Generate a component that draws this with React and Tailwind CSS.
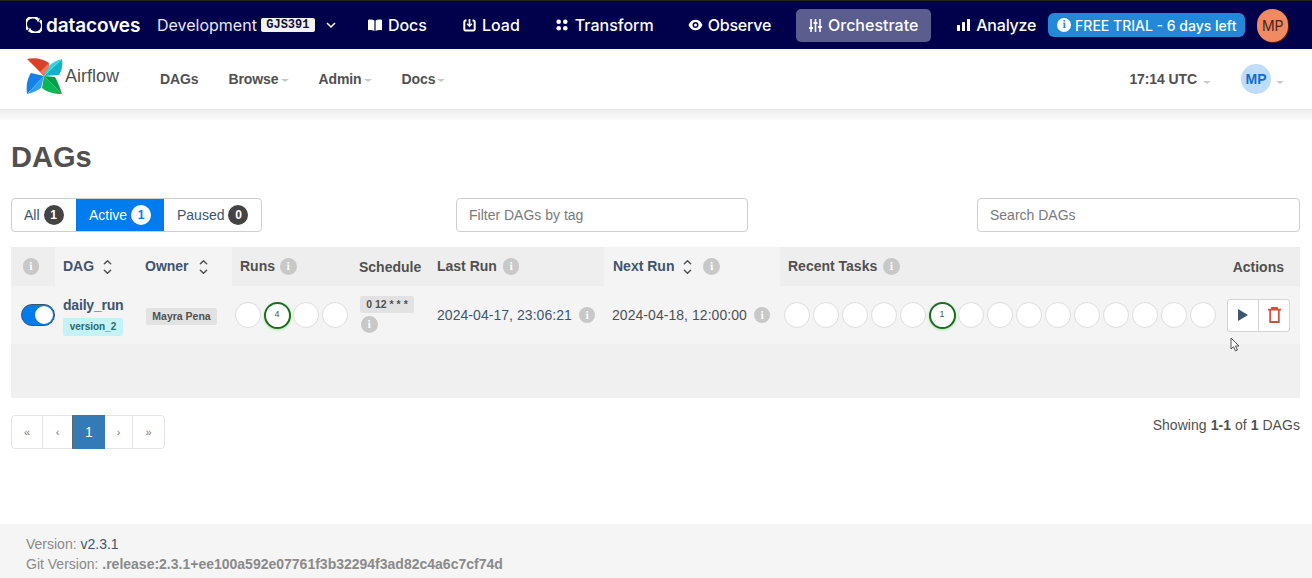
import React from 'react';

const Info = ({ className = '' }) => (
  <span className={`inline-flex w-[16.5px] h-[16.5px] rounded-full bg-[#c8c8c8] text-white items-center justify-center text-[11px] font-bold font-serif leading-none shrink-0 ${className}`}>i</span>
);

const Sort = () => (
  <svg width="9" height="18" viewBox="0 0 10 18" fill="none" stroke="#51504f" strokeWidth="1.6" strokeLinecap="round" strokeLinejoin="round">
    <path d="M1.5 5.5 5 2l3.5 3.5" />
    <path d="M1.5 12.5 5 16l3.5-3.5" />
  </svg>
);

const Circle = ({ value }) =>
  value ? (
    <div className="w-[27px] h-[27px] -mx-[0.5px] rounded-full border-2 border-[#1f6b24] bg-white shadow-[0_1px_3px_#a6e8a0] flex items-center justify-center text-[9px] text-[#51504f] shrink-0">
      {value}
    </div>
  ) : (
    <div className="w-[26px] h-[26px] rounded-full border border-[#dedede] bg-white shrink-0" />
  );

const Caret = () => <span className="ml-[2px] mt-[3px] border-x-[4px] border-x-transparent border-t-[3px] border-t-[#c9c9c9] inline-block" />;

const TopLink = ({ icon, label, gap = 'gap-[6px]', className = '' }) => (
  <div className={`flex items-center ${gap} text-white text-[16px] font-medium ${className}`}>
    {icon}
    <span>{label}</span>
  </div>
);

const Pinwheel = () => (
  <svg width="37" height="38" viewBox="0 0 37 38">
    <path d="M1 2 C9 0 17 2 23 6 L18 19 Z" fill="#d8412a" />
    <path d="M23 6 C24 9 23 13 18 19 L14 15 Z" fill="#ee7a5c" />
    <path d="M36 2 C37 8 36 13 33 18 L18 19 Z" fill="#11b3c9" />
    <path d="M36 2 L18 19 L24 8 C27 5 32 3 36 2Z" fill="#35d3dd" />
    <path d="M36 37 C28 37 21 35 16 31 L18 19 Z" fill="#07b654" />
    <path d="M36 37 L18 19 L29 20 C32 25 34 31 36 37Z" fill="#00a04a" />
    <path d="M1 37 C0 29 1 22 5 16 L18 19 Z" fill="#1481ea" />
    <path d="M1 37 L18 19 L15 31 C11 34 6 36 1 37Z" fill="#2f9ff2" />
  </svg>
);

const App = () => {
  return (
    <div className="relative w-[1312px] h-[578px] flex flex-col bg-white overflow-hidden font-['Liberation_Sans',sans-serif] text-[#51504f]">
      <header className="h-[49px] shrink-0 bg-[#00004b] border-t border-t-[#222] flex items-center text-white font-['Inter',sans-serif]">
        <div className="flex items-center w-[148px] pl-[26px] gap-[4px]">
          <svg width="16" height="16" viewBox="0 0 16 16" fill="none" stroke="white" strokeWidth="2.6">
            <path d="M2 12.500A7 7 0 0 1 11.500 2" />
            <path d="M14 3.500A7 7 0 0 1 4.500 14" />
            <path d="M9.500 0.500 14 1.500 12 5.500Z" fill="white" stroke="none" />
            <path d="M6.500 15.500 2 14.500 4 10.500Z" fill="white" stroke="none" />
          </svg>
          <span className="text-[19px] font-semibold tracking-[-0.1px] leading-none">datacoves</span>
        </div>
        <span className="ml-[9px] text-[16px] text-[#e8e8f2]">Development</span>
        <span className="ml-[4px] bg-[#f2f2f4] text-[#10103c] rounded-[2px] w-[54px] h-[14px] flex items-center justify-center text-[12px] font-bold font-['Liberation_Mono',monospace]">GJS391</span>
        <svg className="ml-[11px]" width="10" height="7" viewBox="0 0 10 7" fill="none" stroke="white" strokeWidth="1.5"><path d="M1 1l4 4 4-4" /></svg>
        <TopLink
          className="ml-[32px]"
          label="Docs"
          icon={<svg width="14" height="12" viewBox="0 0 14 12" fill="white"><path d="M0 1c2.200-.8 4.500-.6 6.400.6V12C4.500 11 2.200 10.800 0 11.300ZM14 1c-2.200-.8-4.500-.6-6.400.6V12c1.900-1 4.200-1.200 6.400-.7Z" /></svg>}
        />
        <TopLink
          className="ml-[36px]"
          label="Load"
          icon={<svg width="13" height="13" viewBox="0 0 13 13" fill="none" stroke="white" strokeWidth="2"><path d="M3.500 1.500H2.500a1.200 1.200 0 0 0-1.200 1.200v7.600a1.200 1.200 0 0 0 1.200 1.200h8a1.200 1.200 0 0 0 1.200-1.200V2.700a1.200 1.200 0 0 0-1.200-1.200H9.500" /><path d="M6.500 0v6" strokeWidth="1.700" /><path d="M4.200 4.800l2.300 2.400 2.300-2.400" strokeWidth="1.500" /></svg>}
        />
        <TopLink
          className="ml-[36px]"
          label="Transform"
          gap="gap-[7px]"
          icon={<svg width="12" height="12" viewBox="0 0 12 12" fill="white"><circle cx="2.700" cy="2.700" r="2.300" /><circle cx="9.300" cy="2.700" r="2.300" /><circle cx="2.700" cy="9.300" r="2.300" /><circle cx="9.300" cy="9.300" r="2.300" /></svg>}
        />
        <TopLink
          className="ml-[34px] tracking-[-0.2px]"
          label="Observe"
          gap="gap-[5px]"
          icon={<svg width="15" height="12" viewBox="0 0 15 12"><path d="M.5 6C2 2.500 4.500.8 7.500.8S13 2.500 14.500 6C13 9.500 10.500 11.200 7.500 11.200S2 9.500.5 6Z" fill="white" /><circle cx="7.500" cy="6" r="3" fill="#00004b" /><circle cx="7.500" cy="6" r="1.500" fill="white" /></svg>}
        />
        <div className="ml-[25px] w-[135px] h-[33px] rounded-[5px] bg-[#5a5d8e] flex items-center justify-center">
          <TopLink
            label="Orchestrate"
            icon={<svg width="13" height="13" viewBox="0 0 13 13" fill="none" stroke="white" strokeWidth="1.600"><path d="M2 0v13M6.500 0v13M11 0v13" /><path d="M0 9h4M4.500 4h4M9 8h4" strokeWidth="2" /></svg>}
          />
        </div>
        <TopLink
          className="ml-[26px] tracking-[-0.2px]"
          label="Analyze"
          icon={<svg width="13" height="12" viewBox="0 0 13 12" fill="white"><rect x="0" y="6" width="3" height="6" rx="0.500" /><rect x="5" y="3" width="3" height="9" rx="0.500" /><rect x="10" y="0" width="3" height="12" rx="0.500" /></svg>}
        />
        <div className="ml-[12px] w-[197px] h-[24px] rounded-[6px] bg-[#2388d8] flex items-center justify-center gap-[4px] text-[14px] font-medium whitespace-nowrap">
          <span className="w-[14px] h-[14px] rounded-full bg-white text-[#2388d8] flex items-center justify-center text-[11px] font-bold font-serif">i</span>
          FREE TRIAL - 6 days left
        </div>
        <div className="ml-[12px] w-[31px] h-[33px] rounded-full bg-[#ef8a62] shadow-[1px_1px_0_#5a1a10] text-[#4a2418] text-[14px] flex items-center justify-center">MP</div>
      </header>

      <nav className="h-[61px] shrink-0 bg-white border-b border-b-[#e4e4e4] flex items-center text-[14px] font-bold tracking-[-0.1px]">
        <div className="ml-[26px] mb-[6px]"><Pinwheel /></div>
        <span className="ml-[2px] mb-[6px] text-[18px] font-normal text-[#51504f] tracking-normal">Airflow</span>
        <span className="ml-[41px]">DAGs</span>
        <span className="ml-[30px] flex items-center">Browse<Caret /></span>
        <span className="ml-[30px] flex items-center">Admin<Caret /></span>
        <span className="ml-[30px] flex items-center">Docs<Caret /></span>
        <span className="ml-auto flex items-center">17:14 UTC<span className="ml-[4px]"><Caret /></span></span>
        <div className="ml-[30px] w-[30px] h-[30px] rounded-full bg-[#bfdcf8] text-[#0f6fcf] flex items-center justify-center text-[14px]">MP</div>
        <span className="ml-[3px] mr-[28px]"><Caret /></span>
      </nav>

      <div className="h-[10px] shrink-0 bg-linear-to-b from-[#efefef] to-[#fafafa]" />

      <main className="flex-1 pl-[11px] pr-[12px]">
        <h1 className="mt-[19px] text-[29px] leading-[36px] font-bold text-[#51504f]">DAGs</h1>

        <div className="mt-[23px] flex items-center h-[34px] text-[14px]">
          <div className="flex h-[34px] w-[251px] border border-[#cfcfcf] rounded-[4px] overflow-hidden text-[#3e5570]">
            <div className="w-[64px] flex items-center pl-[12px] gap-[4px]">
              All
              <span className="w-[20px] h-[20px] rounded-full bg-[#444] text-white text-[12px] font-bold flex items-center justify-center">1</span>
            </div>
            <div className="w-[88px] bg-[#017cee] text-white flex items-center pl-[13px] gap-[4px]">
              Active
              <span className="w-[20px] h-[20px] rounded-full bg-white text-[#017cee] text-[12px] font-bold flex items-center justify-center">1</span>
            </div>
            <div className="flex-1 flex items-center pl-[13px] gap-[4px]">
              Paused
              <span className="w-[20px] h-[20px] rounded-full bg-[#444] text-white text-[12px] font-bold flex items-center justify-center">0</span>
            </div>
          </div>
          <div className="ml-[194px] w-[292px] h-[34px] border border-[#cfcfcf] rounded-[4px] flex items-center px-[12px] text-[#7a7a7a]">Filter DAGs by tag</div>
          <div className="ml-auto w-[323px] h-[34px] border border-[#cfcfcf] rounded-[4px] flex items-center px-[12px] text-[#7a7a7a]">Search DAGs</div>
        </div>

        <div className="mt-[15px] text-[14px]">
          <div className="flex h-[39px] font-bold bg-[#eeeeee] items-center">
            <div className="w-[44px] h-full flex items-center justify-center pr-[4px]"><Info /></div>
            <div className="w-[82px] h-full bg-[#f4f4f5] flex items-center gap-[9px] pl-[8px] text-[#3e5570]">DAG <Sort /></div>
            <div className="w-[95px] h-full bg-[#f4f4f5] flex items-center gap-[10px] pl-[8px] text-[#3e5570]">Owner <Sort /></div>
            <div className="w-[119px] flex items-center gap-[5px] pl-[8px]">Runs <Info /></div>
            <div className="w-[78px] pl-[8px] pt-[2px]">Schedule</div>
            <div className="w-[175px] flex items-center gap-[6px] pl-[8px]">Last Run <Info /></div>
            <div className="w-[176px] h-full bg-[#f4f4f5] flex items-center gap-[9px] pl-[9px] text-[#3e5570]">Next Run <Sort /><span className="ml-[2px] flex"><Info /></span></div>
            <div className="w-[442px] flex items-center gap-[6px] pl-[8px]">Recent Tasks <Info /></div>
            <div className="w-[78px] text-right pr-[16px] pt-[2px]">Actions</div>
          </div>

          <div className="flex h-[58px] bg-[#f4f4f5] items-center">
            <div className="w-[44px] flex justify-end">
              <div className="w-[34px] h-[22px] rounded-full bg-[#017cee] border border-[#3e5570] flex items-center justify-end pr-[1px]">
                <div className="w-[18px] h-[18px] rounded-full bg-white" />
              </div>
            </div>
            <div className="w-[82px] pl-[8px] pt-[2px]">
              <div className="font-bold text-[#3e5570] leading-[17px] tracking-[-0.2px]">daily_run</div>
              <div className="mt-[4px] w-[60px] h-[18px] bg-[#c5f2f5] rounded-[2px] text-[10px] font-bold text-[#2a6b6e] flex items-center justify-center">version_2</div>
            </div>
            <div className="w-[95px] pl-[9px] pt-[3px]">
              <div className="w-[71px] h-[17px] bg-[#e2e2e2] rounded-[2px] text-[10.500px] font-bold flex items-center justify-center">Mayra Pena</div>
            </div>
            <div className="w-[119px] pl-[3px] flex items-center gap-[3px]">
              <Circle />
              <Circle value="4" />
              <Circle />
              <Circle />
            </div>
            <div className="w-[78px] pl-[9px]">
              <div className="w-[54px] h-[17px] bg-[#e2e2e2] rounded-[2px] text-[10.500px] font-bold flex items-center justify-center">0 12 * * *</div>
              <Info className="mt-[3px] ml-[1px]" />
            </div>
            <div className="w-[175px] pl-[8px] flex items-center gap-[7px] text-[#3e5570] tracking-[0.05px]">2024-04-17, 23:06:21 <Info /></div>
            <div className="w-[176px] pl-[8px] flex items-center gap-[7px] tracking-[0.05px]">2024-04-18, 12:00:00 <Info /></div>
            <div className="w-[442px] pl-[4px] flex items-center gap-[3px]">
              {[0, 1, 2, 3, 4].map((i) => <Circle key={i} />)}
              <Circle value="1" />
              {[0, 1, 2, 3, 4, 5, 6, 7, 8].map((i) => <Circle key={i} />)}
            </div>
            <div className="w-[78px] pl-[5px]">
              <div className="w-[63px] h-[33px] flex border border-[#d4d4d4] rounded-[3px] bg-white">
                <div className="w-[31px] flex items-center justify-center border-r border-r-[#d4d4d4]">
                  <svg width="10" height="12" viewBox="0 0 10 12" fill="#3e5570"><path d="M0 0l10 6L0 12z" /></svg>
                </div>
                <div className="flex-1 flex items-center justify-center">
                  <svg width="13" height="16" viewBox="0 0 13 16" fill="none" stroke="#c9523a" strokeWidth="1.800"><path d="M0 2.700h13M4 2.700V1h5v1.700M2.200 3v12h8.600V3" /></svg>
                </div>
              </div>
            </div>
          </div>

          <div className="h-[54px] bg-[#f0f0f0]" />
        </div>

        <div className="mt-[17px] flex items-start justify-between">
          <div className="flex h-[34px] w-[154px] border border-[#e4e4e4] rounded-[4px] text-[11px] text-[#777]">
            <div className="w-[31px] flex items-center justify-center border-r border-r-[#e4e4e4]">«</div>
            <div className="w-[29px] flex items-center justify-center">‹</div>
            <div className="w-[33px] -my-px bg-[#337ab7] border-l border-l-[#666] text-white text-[14px] flex items-center justify-center">1</div>
            <div className="w-[28px] flex items-center justify-center border-r border-r-[#e4e4e4]">›</div>
            <div className="flex-1 flex items-center justify-center">»</div>
          </div>
          <div className="text-[14px] leading-[20px] tracking-[0.05px]">Showing <b>1-1</b> of <b>1</b> DAGs</div>
        </div>
      </main>

      <footer className="h-[54px] shrink-0 bg-[#f5f5f5] pl-[26px] pt-[10px] text-[14px] leading-[20px] text-[#8a8a8a]">
        <div>Version: <span className="text-[#3e5570]">v2.3.1</span></div>
        <div>Git Version: <b>.release:2.3.1+ee100a592e07761f3b32294f3ad82c4a6c7cf74d</b></div>
      </footer>

      {/* mouse pointer caught in the recording */}
      <svg className="absolute left-[1230px] top-[337px]" width="10" height="15" viewBox="0 0 10 15">
        <path d="M1 1v11l2.500-2.300L5.500 14l2-1-2-4H9Z" fill="white" stroke="#444" strokeWidth="0.900" />
      </svg>
    </div>
  );
};

export default App;
